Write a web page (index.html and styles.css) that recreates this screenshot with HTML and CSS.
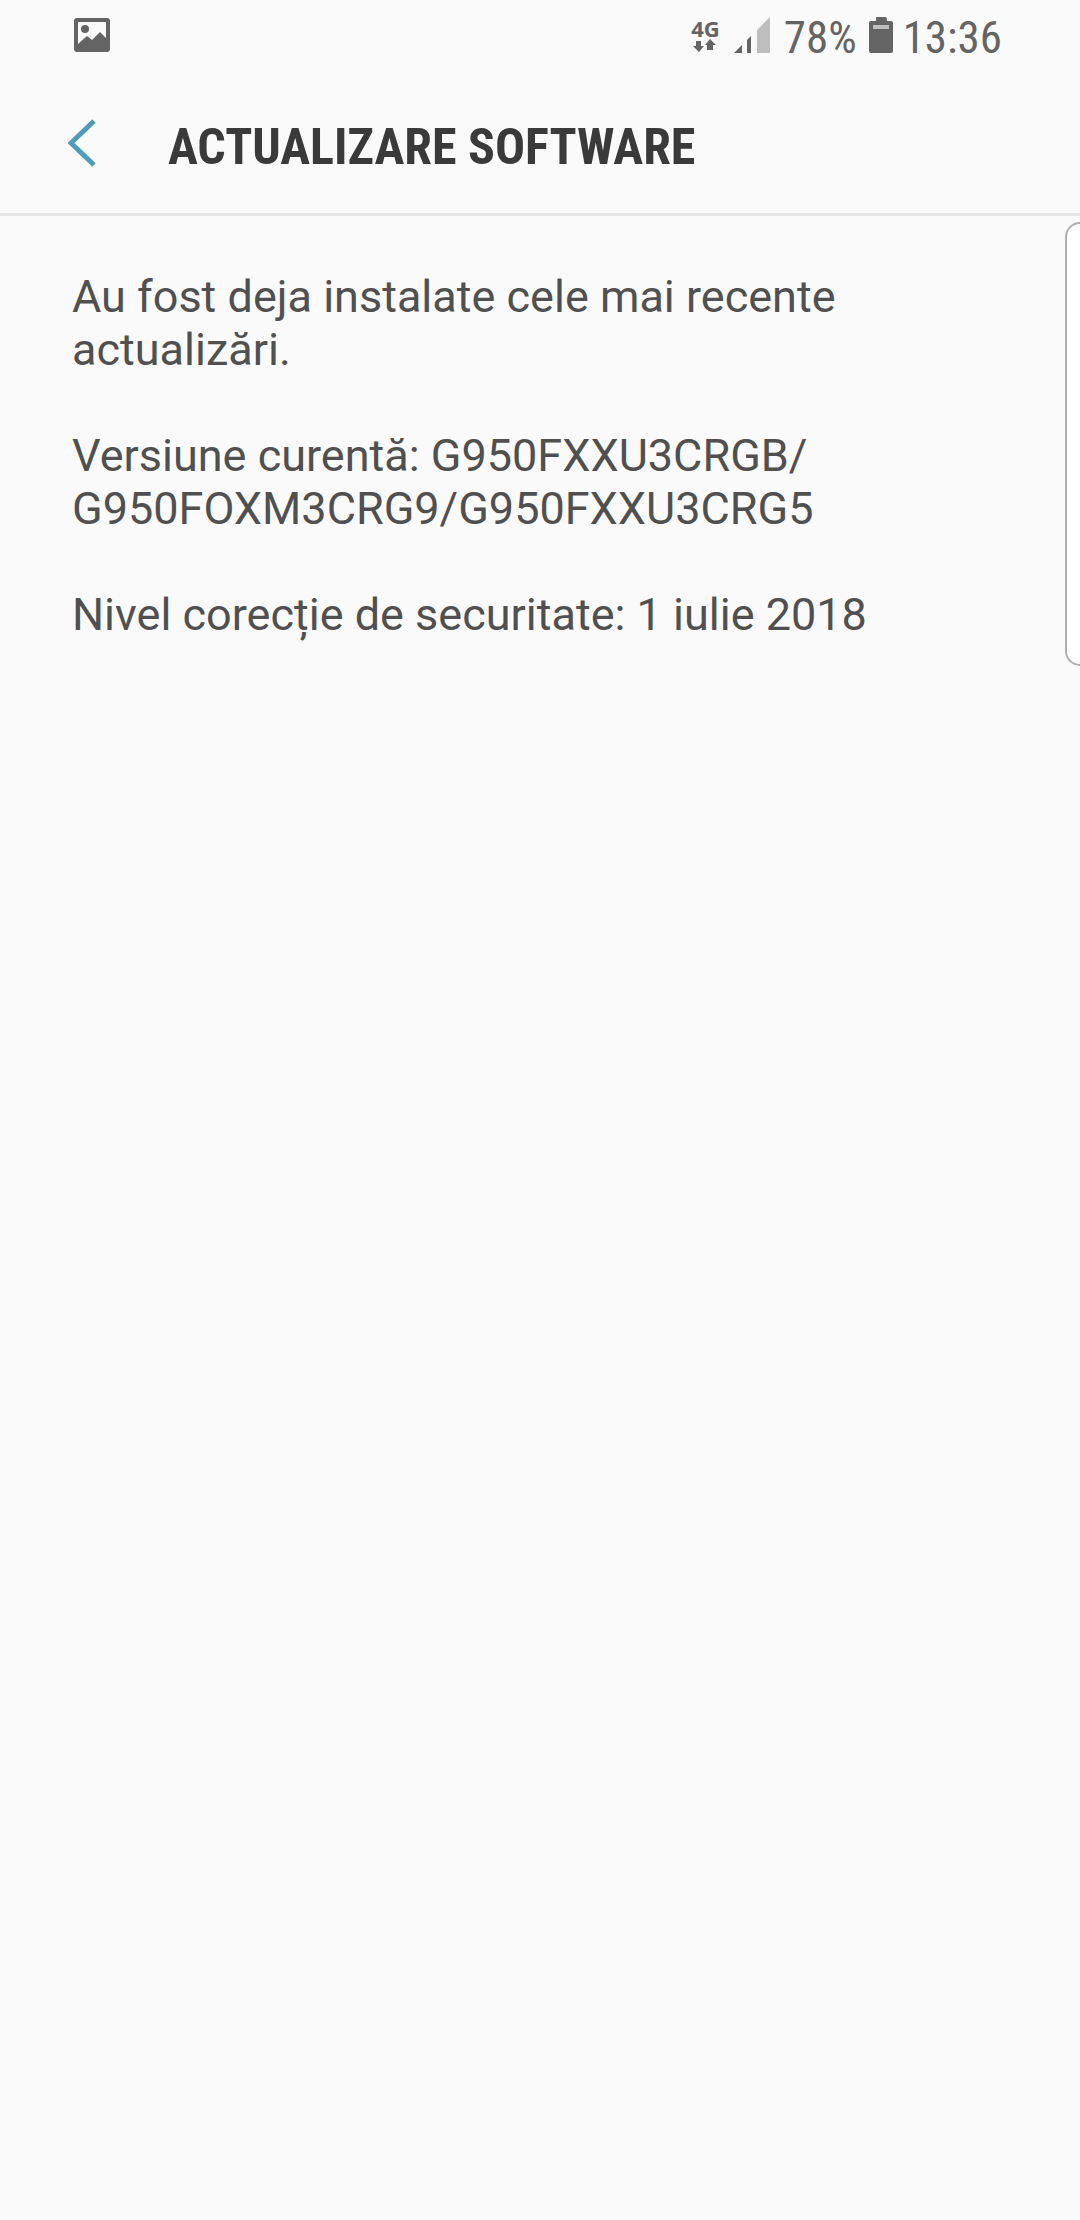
FILE: index.html
```html
<!DOCTYPE html>
<html lang="ro">
<head>
    <meta charset="UTF-8">
    <meta name="viewport" content="width=device-width, initial-scale=1">
    <title>Actualizare software</title>
    <link rel="stylesheet" href="styles.css">
</head>
<body>
    <div class="status-bar">
        <svg class="icon-picture" width="36" height="34" viewBox="0 0 36 34">
            <path fill="#646464" fill-rule="evenodd" d="M3 0H33Q36 0 36 3V31Q36 34 33 34H3Q0 34 0 31V3Q0 0 3 0ZM4 4V26L13 18L18 22L26 14L32 20V4Z"/>
            <circle cx="11" cy="11" r="4" fill="#646464"/>
        </svg>
        <div class="status-right">
            <div class="network">
                <span class="network-type">4G</span>
                <svg width="24" height="14" viewBox="0 0 24 14">
                    <path fill="#646464" d="M3 2H8V7H11L6 13L0 7H3ZM17 0L23 6H20V11H14V6H12Z"/>
                </svg>
            </div>
            <svg class="icon-signal" width="36" height="36" viewBox="0 0 36 36">
                <path fill="#646464" d="M0 36L8 28V36ZM13 36V23L17 19V36Z"/>
                <path fill="#bebebe" d="M23 36V13L36 0V36Z"/>
            </svg>
            <span class="status-text battery-level">78%</span>
            <svg class="icon-battery" width="24" height="36" viewBox="0 0 24 36">
                <path fill="#646464" d="M2 4H7V1Q7 0 8 0H16Q18 0 18 2V4H22Q24 4 24 6V34Q24 36 22 36H2Q0 36 0 34V6Q0 4 2 4Z"/>
                <path fill="#bebebe" d="M4 8H20V12H4Z"/>
            </svg>
            <span class="status-text">13:36</span>
        </div>
    </div>

    <header class="header">
        <button class="back" type="button" aria-label="Înapoi">
            <svg width="28" height="48" viewBox="0 0 28 48">
                <path fill="none" stroke="#4f9cb9" stroke-width="5" d="M26 2L3 24L26 46"/>
            </svg>
        </button>
        <h1 class="title">ACTUALIZARE SOFTWARE</h1>
    </header>

    <main class="content">
        <p>Au fost deja instalate cele mai recente actualizări.</p>
        <p>Versiune curentă: G950FXXU3CRGB/<wbr>G950FOXM3CRG9/G950FXXU3CRG5</p>
        <p>Nivel corecție de securitate: 1 iulie 2018</p>
    </main>

    <!-- mânerul panoului lateral -->
    <div class="edge-handle"></div>
</body>
</html>
```

FILE: styles.css
```css
* {
    box-sizing: border-box;
}

body {
    margin: 0;
    min-height: 100vh;
    position: relative;
    overflow-x: hidden;
    font-family: Roboto, sans-serif;
    background-color: #fafafa;
    color: #505050;
}

svg {
    display: block;
}

.status-bar {
    display: flex;
    justify-content: space-between;
    align-items: center;
    height: 72px;
    padding: 0 78px 2px 74px;
}

.status-right {
    display: flex;
    align-items: center;
}

.network {
    display: flex;
    flex-direction: column;
    align-items: center;
    margin-right: 14px;
}

.network-type {
    font-family: "Open Sans", sans-serif;
    font-size: 22px;
    font-weight: bold;
    line-height: 22px;
    color: #646464;
}

.status-text {
    padding-top: 4px;
    font-family: "Roboto Condensed", Roboto, sans-serif;
    font-size: 45px;
    line-height: 53px;
    color: #646464;
}

.battery-level {
    margin: 0 12px 0 14px;
}

.icon-battery {
    margin-right: 10px;
}

.header {
    display: flex;
    align-items: center;
    height: 144px;
    padding-left: 68px;
    border-bottom: 3px solid #e6e6e6;
}

.back {
    padding: 0;
    border: none;
    background: none;
    cursor: pointer;
}

.title {
    margin: 0 0 0 72px;
    padding-top: 8px;
    font-family: "Roboto Condensed", Roboto, sans-serif;
    font-size: 50px;
    font-weight: bold;
    color: #3a3a3a;
}

.content {
    padding: 54px 72px;
    font-size: 45px;
    line-height: 53px;
}

.content p {
    margin: 0 0 53px;
}

.edge-handle {
    position: absolute;
    top: 222px;
    right: 0;
    width: 15px;
    height: 444px;
    border: 2px solid #afafaf;
    border-right: none;
    border-radius: 16px 0 0 16px;
    background-color: #fff;
}
```
